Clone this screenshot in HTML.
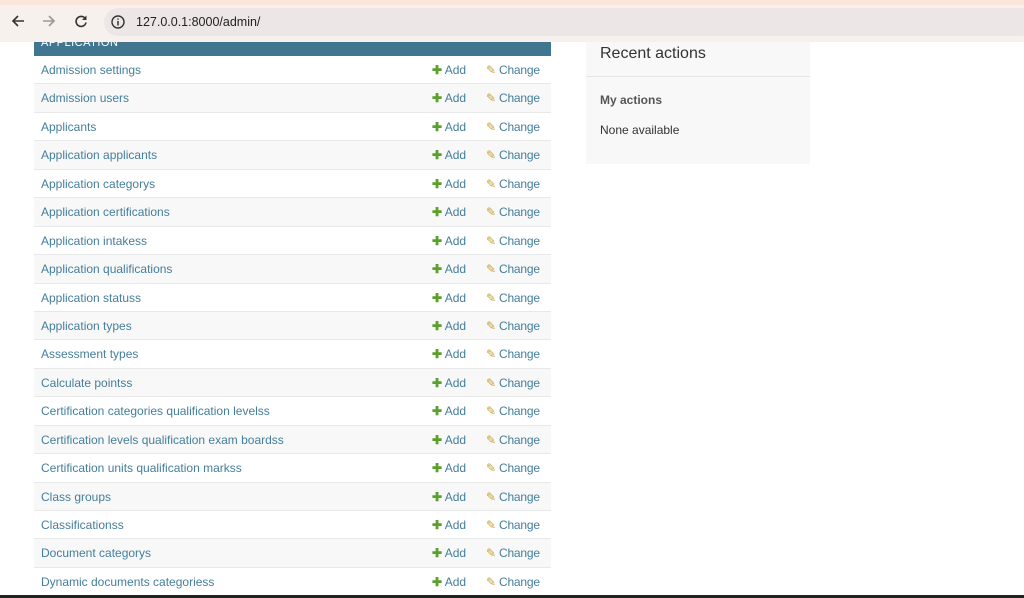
<!DOCTYPE html>
<html><head><meta charset="utf-8"><style>
*{margin:0;padding:0;box-sizing:border-box}
body{width:1024px;height:598px;overflow:hidden;background:#fff;font-family:"Liberation Sans",sans-serif;position:relative}
.top{position:absolute;left:0;top:0;width:1024px;height:42px;background:#f7f1ee;border-top:5px solid #fbe6dc}
.url{position:absolute;left:104px;top:3px;width:930px;height:28px;border-radius:14px;background:#ede6e6}
.url span{position:absolute;left:32px;top:7px;font-size:12.5px;color:#222}
.ic{position:absolute;top:9px;font-size:15px;color:#333;line-height:15px}
.hdr{position:absolute;left:34px;top:42px;width:517px;height:14px;background:#417690;color:#fff;font-size:11px;padding-left:7px;line-height:2px;overflow:hidden;letter-spacing:.5px}
.tbl{position:absolute;left:34px;top:56px;width:517px}
.row{height:28.44px;border-bottom:1px solid #e8e8e8;position:relative;font-size:12px;color:#447e9b}
.row:nth-child(even){background:#f8f8f8}
.row .n{position:absolute;left:7px;top:7px}
.row .a{position:absolute;left:398px;top:7px}
.row .a b{color:#5aa02c;font-size:12px}
.row .c{position:absolute;left:452px;top:7px;letter-spacing:-.2px}
.row .c b{color:#c8a032;font-weight:normal}
.ra{position:absolute;left:586px;top:42px;width:224px;height:122px;background:#f8f8f8}
.ra h2{font-weight:normal;font-size:16px;color:#333;position:absolute;left:14px;top:3px}
.ra .ln{position:absolute;left:0;top:34px;width:224px;height:1px;background:#e6e6e6}
.ra h3{font-size:12px;color:#555;position:absolute;left:14px;top:51px}
.ra p{font-size:12px;color:#333;position:absolute;left:14px;top:81px}
.bot{position:absolute;left:0;top:595px;width:1024px;height:3px;background:#222}
</style></head><body>
<div class="top">
<svg style="position:absolute;left:11px;top:9px" width="14" height="14" viewBox="0 0 14 14"><path d="M13 7H2M7 2L2 7l5 5" fill="none" stroke="#333" stroke-width="1.6"/></svg>
<svg style="position:absolute;left:42px;top:9px" width="14" height="14" viewBox="0 0 14 14"><path d="M1 7h11M7 2l5 5-5 5" fill="none" stroke="#999" stroke-width="1.6"/></svg>
<svg style="position:absolute;left:74px;top:9px" width="14" height="14" viewBox="0 0 14 14"><path d="M11.5 5A5 5 0 1 0 12 8.5" fill="none" stroke="#333" stroke-width="1.6"/><path d="M12.5 1.5v4.5H8z" fill="#333"/></svg>
<div class="url"><svg style="position:absolute;left:7px;top:7px" width="14" height="14" viewBox="0 0 14 14"><circle cx="7" cy="7" r="6" fill="none" stroke="#333" stroke-width="1.4"/><path d="M7 6v4.5M7 3.5v1.3" stroke="#333" stroke-width="1.5"/></svg><span>127.0.0.1:8000/admin/</span></div>
</div>
<div class="hdr">APPLICATION</div>
<div class="tbl">
<div class="row"><span class="n">Admission settings</span><span class="a"><b>✚</b> Add</span><span class="c"><b>✎</b> Change</span></div>
<div class="row"><span class="n">Admission users</span><span class="a"><b>✚</b> Add</span><span class="c"><b>✎</b> Change</span></div>
<div class="row"><span class="n">Applicants</span><span class="a"><b>✚</b> Add</span><span class="c"><b>✎</b> Change</span></div>
<div class="row"><span class="n">Application applicants</span><span class="a"><b>✚</b> Add</span><span class="c"><b>✎</b> Change</span></div>
<div class="row"><span class="n">Application categorys</span><span class="a"><b>✚</b> Add</span><span class="c"><b>✎</b> Change</span></div>
<div class="row"><span class="n">Application certifications</span><span class="a"><b>✚</b> Add</span><span class="c"><b>✎</b> Change</span></div>
<div class="row"><span class="n">Application intakess</span><span class="a"><b>✚</b> Add</span><span class="c"><b>✎</b> Change</span></div>
<div class="row"><span class="n">Application qualifications</span><span class="a"><b>✚</b> Add</span><span class="c"><b>✎</b> Change</span></div>
<div class="row"><span class="n">Application statuss</span><span class="a"><b>✚</b> Add</span><span class="c"><b>✎</b> Change</span></div>
<div class="row"><span class="n">Application types</span><span class="a"><b>✚</b> Add</span><span class="c"><b>✎</b> Change</span></div>
<div class="row"><span class="n">Assessment types</span><span class="a"><b>✚</b> Add</span><span class="c"><b>✎</b> Change</span></div>
<div class="row"><span class="n">Calculate pointss</span><span class="a"><b>✚</b> Add</span><span class="c"><b>✎</b> Change</span></div>
<div class="row"><span class="n">Certification categories qualification levelss</span><span class="a"><b>✚</b> Add</span><span class="c"><b>✎</b> Change</span></div>
<div class="row"><span class="n">Certification levels qualification exam boardss</span><span class="a"><b>✚</b> Add</span><span class="c"><b>✎</b> Change</span></div>
<div class="row"><span class="n">Certification units qualification markss</span><span class="a"><b>✚</b> Add</span><span class="c"><b>✎</b> Change</span></div>
<div class="row"><span class="n">Class groups</span><span class="a"><b>✚</b> Add</span><span class="c"><b>✎</b> Change</span></div>
<div class="row"><span class="n">Classificationss</span><span class="a"><b>✚</b> Add</span><span class="c"><b>✎</b> Change</span></div>
<div class="row"><span class="n">Document categorys</span><span class="a"><b>✚</b> Add</span><span class="c"><b>✎</b> Change</span></div>
<div class="row"><span class="n">Dynamic documents categoriess</span><span class="a"><b>✚</b> Add</span><span class="c"><b>✎</b> Change</span></div>
</div>
<div class="ra"><h2>Recent actions</h2><div class="ln"></div><h3>My actions</h3><p>None available</p></div>
<div class="bot"></div>
</body></html>
